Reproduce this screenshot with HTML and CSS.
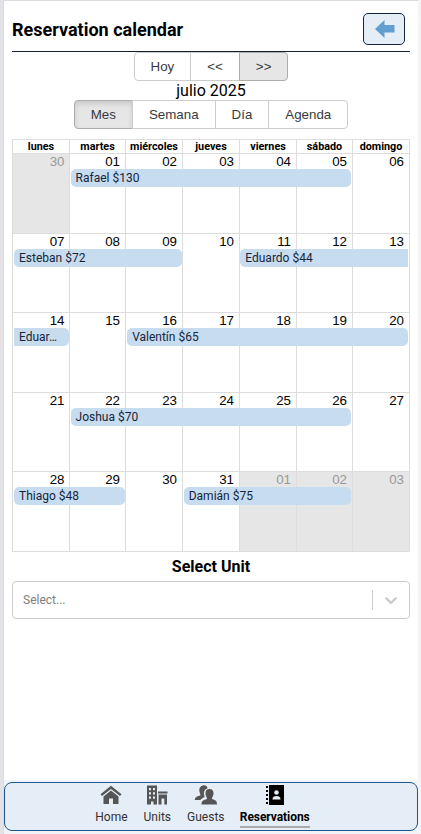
FILE: index.html
```
<!DOCTYPE html>
<html lang="es">
<head>
<meta charset="utf-8">
<title>Reservation calendar</title>
<link rel="stylesheet" href="styles.css">
</head>
<body>
<div class="app">
  <main class="content">
    <header class="page-header">
      <h1>Reservation calendar</h1>
      <button class="back" aria-label="Back"><svg width="20" height="18" viewBox="0 0 20 18"><path d="M0 9 9.500 0V5H19.500V12.500H9.500V18Z"/></svg></button>
    </header>
    <div class="toolbar">
      <div class="group"><button>Hoy</button><button>&lt;&lt;</button><button class="hover">&gt;&gt;</button></div>
      <span class="label">julio 2025</span>
      <div class="group"><button class="active">Mes</button><button>Semana</button><button>Día</button><button>Agenda</button></div>
    </div>
    <section class="month">
      <div class="weekdays"><b>lunes</b><b>martes</b><b>miércoles</b><b>jueves</b><b>viernes</b><b>sábado</b><b>domingo</b></div>
      <div class="week">
        <div class="day off">30</div><div class="day">01</div><div class="day">02</div><div class="day">03</div><div class="day">04</div><div class="day">05</div><div class="day">06</div>
        <div class="events"><div class="slot from2 span5"><div class="event">Rafael $130</div></div></div>
      </div>
      <div class="week">
        <div class="day">07</div><div class="day">08</div><div class="day">09</div><div class="day">10</div><div class="day">11</div><div class="day">12</div><div class="day">13</div>
        <div class="events"><div class="slot from1 span3"><div class="event">Esteban $72</div></div><div class="slot from5 span3"><div class="event continues">Eduardo $44</div></div></div>
      </div>
      <div class="week">
        <div class="day">14</div><div class="day">15</div><div class="day">16</div><div class="day">17</div><div class="day">18</div><div class="day">19</div><div class="day">20</div>
        <div class="events"><div class="slot from1 span1"><div class="event continued">Eduar…</div></div><div class="slot from3 span5"><div class="event">Valentín $65</div></div></div>
      </div>
      <div class="week">
        <div class="day">21</div><div class="day">22</div><div class="day">23</div><div class="day">24</div><div class="day">25</div><div class="day">26</div><div class="day">27</div>
        <div class="events"><div class="slot from2 span5"><div class="event">Joshua $70</div></div></div>
      </div>
      <div class="week">
        <div class="day">28</div><div class="day">29</div><div class="day">30</div><div class="day">31</div><div class="day off">01</div><div class="day off">02</div><div class="day off">03</div>
        <div class="events"><div class="slot from1 span2"><div class="event">Thiago $48</div></div><div class="slot from4 span3"><div class="event">Damián $75</div></div></div>
      </div>
    </section>
    <h2>Select Unit</h2>
    <div class="select">
      <span class="placeholder">Select...</span>
      <span class="separator"></span>
      <span class="chevron"><svg width="20" height="20" viewBox="0 0 20 20"><path d="M4.516 7.548c0.436-0.446 1.043-0.481 1.576 0l3.908 3.747 3.908-3.747c0.533-0.481 1.141-0.446 1.574 0 0.436 0.445 0.408 1.197 0 1.615-0.406 0.418-4.695 4.502-4.695 4.502-0.217 0.223-0.502 0.335-0.787 0.335s-0.570-0.112-0.789-0.335c0 0-4.287-4.084-4.695-4.502s-0.436-1.170 0-1.615z"/></svg></span>
    </div>
  </main>
  <div class="nav-wrap">
    <nav>
      <a><svg width="22" height="20" viewBox="0 0 22 20"><path d="M11 .8 .5 9.300 2 11 11 3.900 20 11 21.500 9.300Z"/><path d="M11 5.500 3.500 11.500V19H9V13.500H13V19H18.500V11.500Z"/></svg><span>Home</span></a>
      <a><svg width="22" height="20" viewBox="0 0 22 20"><path fill-rule="evenodd" d="M1 .5H11V19.500H7.500V16.500H5V19.500H1ZM3 3V5.200H5V3ZM7 3V5.200H9V3ZM3 7.200V9.400H5V7.200ZM7 7.200V9.400H9V7.200ZM3 11.500V13.700H5V11.500ZM7 11.500V13.700H9V11.500ZM12 6.500H21.500V8.500H12ZM12.500 9.500H21V19.500H18.300V13.500H15.500V19.500H12.500Z"/></svg><span>Units</span></a>
      <a><svg width="24" height="20" viewBox="0 0 24 20"><path d="M9 .5C11 0 13.300 1 13.500 3.200 10.500 4.500 9.500 6.500 10 9.500L10.600 12C8.500 13 7.200 13.700 6.500 15H.8C1 12 3 11.500 6.300 10.500 6.800 8.800 5.300 8 5.300 5 5.300 2.500 6.800.8 9 .5Z"/><path d="M15.500 4C18.500 4 19.800 6 19.500 9 19.300 11 18 12 18 14 21.500 15.300 23 15.500 23 19.500H7.500C7.500 15.500 9.500 15.300 13 14 13 12 11.500 11 11.500 8.500 11.300 6 12.500 4 15.500 4Z"/></svg><span>Guests</span></a>
      <a class="current"><svg width="20" height="20" viewBox="0 0 20 20"><path d="M4 0H19V20H4ZM1 1H3V3H1ZM1 5H3V7H1ZM1 9H3V11H1ZM1 13H3V15H1ZM1 17H3V19H1Z"/><g class="contact"><circle cx="11.500" cy="7.500" r="2.300"/><path d="M7.500 14.500C7.500 11.700 9 11 11.500 11S15.500 11.700 15.500 14.500Z"/></g></svg><span>Reservations</span></a>
    </nav>
  </div>
</div>
</body>
</html>
```
FILE: styles.css
```
* { box-sizing: border-box; }
html, body { height: 100%; margin: 0; }
body {
  display: flex;
  padding: 0 3px;
  background: linear-gradient(90deg, #e3e2e7 50%, #f4f4f4 50%);
  font-family: Roboto, sans-serif;
  color: #000;
  overflow: hidden;
}
.app {
  flex: 1;
  display: flex;
  flex-direction: column;
  background: #fff;
  border-top: 1px solid #dcdcdc;
  border-left: 1px solid #dcdcdc;
}
.content { flex: 1; padding: 0 8px; }
.page-header {
  display: flex;
  align-items: center;
  justify-content: space-between;
  height: 51px;
  padding: 6px 5px 0 0;
  border-bottom: 1px solid #15202f;
}
h1 { margin: 2px 0 0; font-size: 18px; line-height: 24px; font-weight: 700; }
.back {
  display: flex;
  align-items: center;
  justify-content: center;
  width: 42px;
  height: 32px;
  padding: 0 0 0 1px;
  border: 1px solid #14253a;
  border-radius: 5px;
  background: #e5edf7;
}
.back svg { fill: #619fd0; }
.toolbar { display: flex; flex-direction: column; align-items: center; margin-bottom: 10px; }
.label { font-size: 16px; line-height: 19px; }
.group { display: flex; }
.group button {
  height: 29px;
  margin: 0;
  padding: 0 16px;
  border: 1px solid #ccc;
  background: #fff;
  color: #373a3c;
  font: 13.333px/27px "Liberation Sans", sans-serif;
}
.group button + button { margin-left: -1px; }
.group button:first-child { border-radius: 4px 0 0 4px; }
.group button:last-child { border-radius: 0 4px 4px 0; }
.group .hover { background: #e6e6e6; border-color: #adadad; }
.group .active {
  background: #e6e6e6;
  border-color: #adadad;
  box-shadow: inset 0 3px 5px rgba(0, 0, 0, .125);
}
.month { display: flex; flex-direction: column; height: 413px; border: 1px solid #ddd; }
.weekdays, .week { display: grid; grid-template-columns: 56px 56px 57px 57px 57px 56px 57px; }
.weekdays { height: 13px; }
.weekdays b { min-width: 0; text-align: center; font-size: 10.800px; line-height: 13px; white-space: nowrap; }
.weekdays b + b, .day + .day { border-left: 1px solid #ddd; }
.week { position: relative; flex: 1; border-top: 1px solid #ddd; }
.day { padding-right: 5px; text-align: right; font: 13.333px/15px "Liberation Sans", sans-serif; }
.day:first-child { padding-right: 4.500px; }
.off { background: #e6e6e6; color: #999; }
.events { position: absolute; inset: 15px 0 auto; display: grid; grid-template-columns: repeat(7, 1fr); }
.slot { min-width: 0; padding: 0 1px; }
.from1 { grid-column-start: 1; }
.from2 { grid-column-start: 2; }
.from3 { grid-column-start: 3; }
.from4 { grid-column-start: 4; }
.from5 { grid-column-start: 5; }
.span1 { grid-column-end: span 1; }
.span2 { grid-column-end: span 2; }
.span3 { grid-column-end: span 3; }
.span5 { grid-column-end: span 5; }
.event {
  height: 18px;
  padding: 0 5px;
  border-radius: 5px;
  background: #c8dcef;
  color: #15253a;
  font-size: 12px;
  line-height: 18px;
  white-space: nowrap;
}
.continues { border-top-right-radius: 0; border-bottom-right-radius: 0; }
.continued { border-top-left-radius: 0; border-bottom-left-radius: 0; }
h2 { margin: 5px 0; text-align: center; font-size: 16px; line-height: 19px; font-weight: 700; }
.select { display: flex; align-items: center; height: 38px; border: 1px solid #ccc; border-radius: 4px; }
.placeholder { flex: 1; padding-left: 10px; color: #808080; font-size: 12px; }
.separator { width: 1px; height: 20px; background: #ccc; }
.chevron { display: flex; padding: 8px; }
.chevron svg { fill: #ccc; }
.nav-wrap { padding: 2px 0 3px; background: linear-gradient(#f0f5fb 50%, #f1f3f8 50%); }
nav {
  display: flex;
  justify-content: center;
  height: 49px;
  padding-top: 2px;
  border: 1px solid #1d5790;
  border-radius: 8px;
  background: #e5edf7;
}
nav a { display: flex; flex-direction: column; align-items: center; height: 43px; margin-right: 16px; color: #333; font-size: 12px; line-height: 14px; }
nav svg { fill: #555; margin-bottom: 5px; }
nav .current { width: 70px; margin: 0 17px 0 -.8px; color: #000; font-weight: 700; letter-spacing: -.06px; border-bottom: 2px solid #aaa; }
nav .current svg { fill: #000; }
.contact { fill: #e5edf7; }
```
